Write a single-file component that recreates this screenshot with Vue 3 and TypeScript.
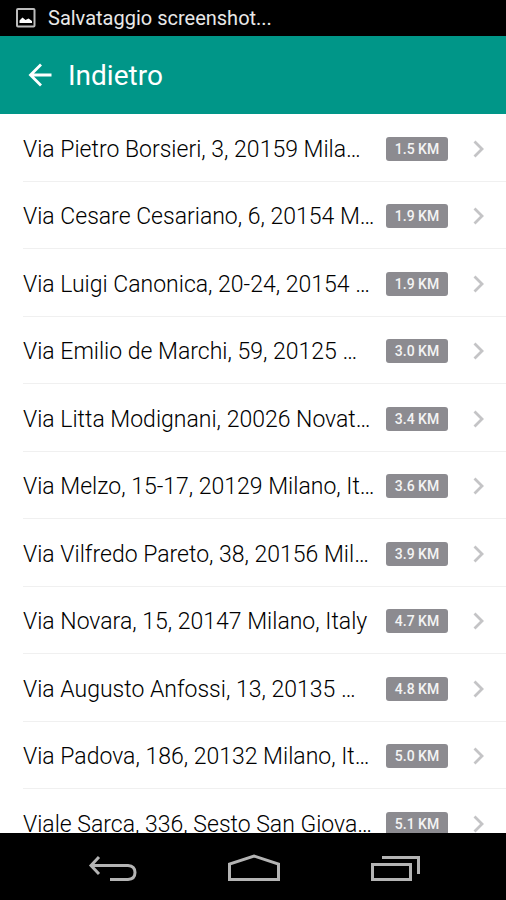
<script setup lang="ts">
interface Place {
  address: string
  distance: string
}

const places: Place[] = [
  { address: 'Via Pietro Borsieri, 3, 20159 Mila…', distance: '1.5 KM' },
  { address: 'Via Cesare Cesariano, 6, 20154 M…', distance: '1.9 KM' },
  { address: 'Via Luigi Canonica, 20-24, 20154 …', distance: '1.9 KM' },
  { address: 'Via Emilio de Marchi, 59, 20125 …', distance: '3.0 KM' },
  { address: 'Via Litta Modignani, 20026 Novat…', distance: '3.4 KM' },
  { address: 'Via Melzo, 15-17, 20129 Milano, It…', distance: '3.6 KM' },
  { address: 'Via Vilfredo Pareto, 38, 20156 Mil…', distance: '3.9 KM' },
  { address: 'Via Novara, 15, 20147 Milano, Italy', distance: '4.7 KM' },
  { address: 'Via Augusto Anfossi, 13, 20135 …', distance: '4.8 KM' },
  { address: 'Via Padova, 186, 20132 Milano, It…', distance: '5.0 KM' },
  { address: 'Viale Sarca, 336, Sesto San Giova…', distance: '5.1 KM' },
]
</script>

<template>
  <div class="screen">
    <div class="status">
      <svg class="status-icon" viewBox="0 0 20 20" aria-hidden="true">
        <rect x="1" y="1" width="17.500" height="17.500" rx="1" fill="none" stroke="#bcbcbc" stroke-width="2" />
        <path d="M3.500 15V12.500L6.500 9.500L9.500 12L12.500 10.500L16 13V15Z" fill="#fff" />
      </svg>
      <span>Salvataggio screenshot...</span>
    </div>

    <header class="bar">
      <button class="back" type="button">
        <svg class="back-icon" viewBox="0 0 24 24" aria-hidden="true">
          <path d="M23.500 12H3M13 1.500L2.500 12L13 22.500" fill="none" stroke="#fff" stroke-width="2.800" />
        </svg>
        <span>Indietro</span>
      </button>
    </header>

    <main class="content">
      <ul class="list">
        <li v-for="place in places" :key="place.address" class="item">
          <a class="row" href="#">
            <span class="address">{{ place.address }}</span>
            <span class="badge">{{ place.distance }}</span>
            <svg class="chevron" viewBox="0 0 12 18" aria-hidden="true">
              <path d="M1.500 1.500L9 9L1.500 16.500" fill="none" stroke="#c4c4c6" stroke-width="2.800" />
            </svg>
          </a>
        </li>
      </ul>
    </main>

    <nav class="nav">
      <button class="key" type="button" aria-label="Back">
        <svg class="key-icon" viewBox="0 0 54 28" aria-hidden="true">
          <path d="M13 3L5 11.500L13 20M5 11.500H42Q49 12 49 18.500Q49 25 42 25.500H24" fill="none" stroke="#b4b4b4" stroke-width="3" />
        </svg>
      </button>
      <button class="key" type="button" aria-label="Home">
        <svg class="key-icon" viewBox="0 0 54 28" aria-hidden="true">
          <path d="M2.500 25.500V10L27 2L51.500 10V25.500Z" fill="none" stroke="#b4b4b4" stroke-width="3" />
        </svg>
      </button>
      <button class="key" type="button" aria-label="Recent apps">
        <svg class="key-icon" viewBox="0 0 54 28" aria-hidden="true">
          <path d="M4.500 10.500H42.500V25.500H4.500ZM14 3.500H50.500V20" fill="none" stroke="#b4b4b4" stroke-width="3" />
        </svg>
      </button>
    </nav>
  </div>
</template>

<style>
body {
  margin: 0;
}
</style>

<style scoped>
.screen {
  display: flex;
  flex-direction: column;
  height: 100vh;
  background: #fff;
  font-family: Roboto, "Liberation Sans", sans-serif;
}

.status {
  display: flex;
  align-items: center;
  gap: 12px;
  height: 36px;
  padding-left: 16px;
  background: #000;
  color: #e8e8e8;
  font-size: 20px;
}

.status-icon {
  width: 20px;
  height: 20px;
}

.bar {
  display: flex;
  height: 78px;
  background: #009688;
}

.back {
  display: flex;
  align-items: center;
  gap: 16px;
  padding: 0 28px;
  border: 0;
  background: none;
  color: #fff;
  font: inherit;
  font-size: 28px;
}

.back-icon {
  width: 24px;
  height: 24px;
}

.content {
  flex: 1;
  min-height: 0;
  overflow: hidden;
}

.list {
  margin: 0;
  padding: 0 0 0 23px;
  list-style: none;
}

.item {
  box-sizing: border-box;
  height: 67px;
  border-bottom: 1px solid #f0f0f0;
}

.item:nth-child(odd) {
  height: 68px;
}

.row {
  display: flex;
  align-items: center;
  box-sizing: border-box;
  height: 100%;
  padding: 2px 21px 0 0;
  color: #000;
  text-decoration: none;
}

.address {
  flex: 1;
  min-width: 0;
  padding-top: 2px;
  font-size: 23px;
  font-weight: 300;
  line-height: 32px;
  white-space: nowrap;
}

.badge {
  width: 62px;
  margin-right: 25px;
  border-radius: 3px;
  background: #8c8b90;
  color: #f4f4f4;
  font-size: 14px;
  font-weight: 500;
  line-height: 24px;
  text-align: center;
}

.chevron {
  width: 12px;
  height: 18px;
}

.nav {
  display: flex;
  align-items: center;
  justify-content: center;
  gap: 87px;
  box-sizing: border-box;
  height: 67px;
  padding: 2px 0 0 2px;
  background: #000;
}

.key {
  display: flex;
  padding: 0;
  border: 0;
  background: none;
}

.key-icon {
  width: 54px;
  height: 28px;
}
</style>
